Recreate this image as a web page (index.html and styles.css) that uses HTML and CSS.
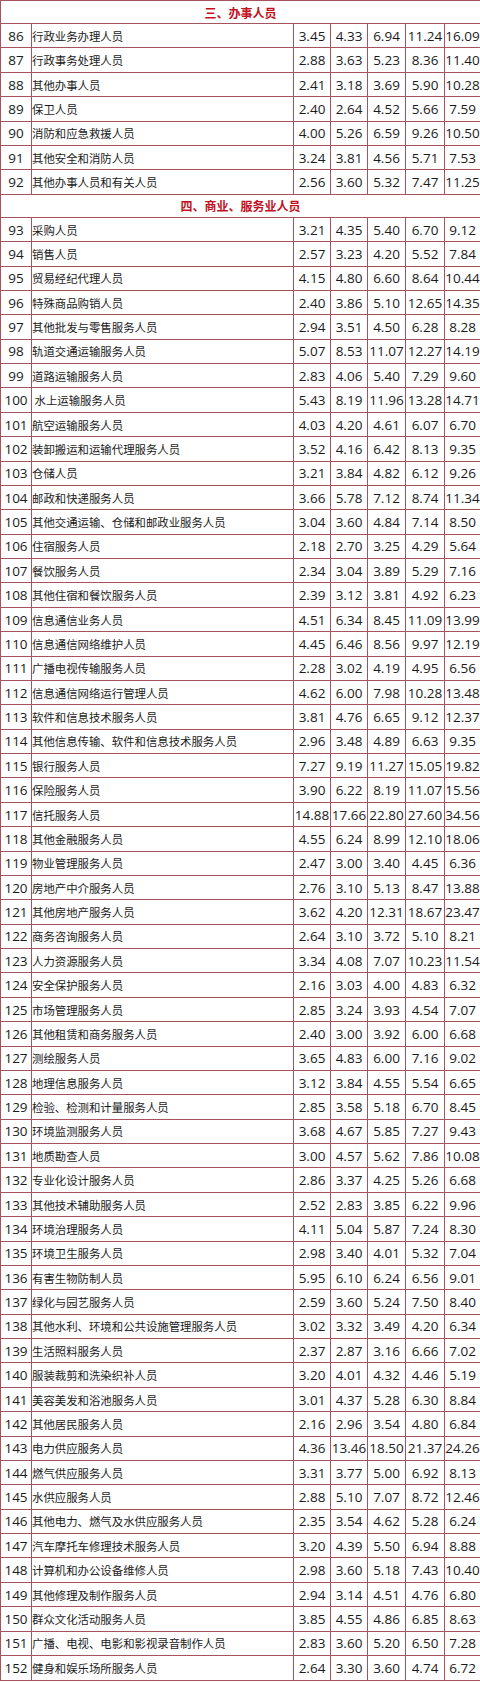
FILE: index.html
```html
<!DOCTYPE html>
<html lang="zh-CN">
<head>
<meta charset="utf-8">
<title>职业工资价位表</title>
<link rel="stylesheet" href="styles.css">
</head>
<body>
<table class="sheet">
<colgroup>
<col class="c-no"><col class="c-name"><col class="c-v1"><col class="c-v2"><col class="c-v3"><col class="c-v4"><col class="c-v5">
</colgroup>
<tbody>
<tr class="section"><td colspan="7">三、办事人员</td></tr>
<tr><td class="no">86</td><td class="name">行政业务办理人员</td><td class="v">3.45</td><td class="v">4.33</td><td class="v">6.94</td><td class="v">11.24</td><td class="v">16.09</td></tr>
<tr><td class="no">87</td><td class="name">行政事务处理人员</td><td class="v">2.88</td><td class="v">3.63</td><td class="v">5.23</td><td class="v">8.36</td><td class="v">11.40</td></tr>
<tr><td class="no">88</td><td class="name">其他办事人员</td><td class="v">2.41</td><td class="v">3.18</td><td class="v">3.69</td><td class="v">5.90</td><td class="v">10.28</td></tr>
<tr><td class="no">89</td><td class="name">保卫人员</td><td class="v">2.40</td><td class="v">2.64</td><td class="v">4.52</td><td class="v">5.66</td><td class="v">7.59</td></tr>
<tr><td class="no">90</td><td class="name">消防和应急救援人员</td><td class="v">4.00</td><td class="v">5.26</td><td class="v">6.59</td><td class="v">9.26</td><td class="v">10.50</td></tr>
<tr><td class="no">91</td><td class="name">其他安全和消防人员</td><td class="v">3.24</td><td class="v">3.81</td><td class="v">4.56</td><td class="v">5.71</td><td class="v">7.53</td></tr>
<tr><td class="no">92</td><td class="name">其他办事人员和有关人员</td><td class="v">2.56</td><td class="v">3.60</td><td class="v">5.32</td><td class="v">7.47</td><td class="v">11.25</td></tr>
<tr class="section"><td colspan="7">四、商业、服务业人员</td></tr>
<tr><td class="no">93</td><td class="name">采购人员</td><td class="v">3.21</td><td class="v">4.35</td><td class="v">5.40</td><td class="v">6.70</td><td class="v">9.12</td></tr>
<tr><td class="no">94</td><td class="name">销售人员</td><td class="v">2.57</td><td class="v">3.23</td><td class="v">4.20</td><td class="v">5.52</td><td class="v">7.84</td></tr>
<tr><td class="no">95</td><td class="name">贸易经纪代理人员</td><td class="v">4.15</td><td class="v">4.80</td><td class="v">6.60</td><td class="v">8.64</td><td class="v">10.44</td></tr>
<tr><td class="no">96</td><td class="name">特殊商品购销人员</td><td class="v">2.40</td><td class="v">3.86</td><td class="v">5.10</td><td class="v">12.65</td><td class="v">14.35</td></tr>
<tr><td class="no">97</td><td class="name">其他批发与零售服务人员</td><td class="v">2.94</td><td class="v">3.51</td><td class="v">4.50</td><td class="v">6.28</td><td class="v">8.28</td></tr>
<tr><td class="no">98</td><td class="name">轨道交通运输服务人员</td><td class="v">5.07</td><td class="v">8.53</td><td class="v">11.07</td><td class="v">12.27</td><td class="v">14.19</td></tr>
<tr><td class="no">99</td><td class="name">道路运输服务人员</td><td class="v">2.83</td><td class="v">4.06</td><td class="v">5.40</td><td class="v">7.29</td><td class="v">9.60</td></tr>
<tr><td class="no">100</td><td class="name">&nbsp;水上运输服务人员</td><td class="v">5.43</td><td class="v">8.19</td><td class="v">11.96</td><td class="v">13.28</td><td class="v">14.71</td></tr>
<tr><td class="no">101</td><td class="name">航空运输服务人员</td><td class="v">4.03</td><td class="v">4.20</td><td class="v">4.61</td><td class="v">6.07</td><td class="v">6.70</td></tr>
<tr><td class="no">102</td><td class="name">装卸搬运和运输代理服务人员</td><td class="v">3.52</td><td class="v">4.16</td><td class="v">6.42</td><td class="v">8.13</td><td class="v">9.35</td></tr>
<tr><td class="no">103</td><td class="name">仓储人员</td><td class="v">3.21</td><td class="v">3.84</td><td class="v">4.82</td><td class="v">6.12</td><td class="v">9.26</td></tr>
<tr><td class="no">104</td><td class="name">邮政和快递服务人员</td><td class="v">3.66</td><td class="v">5.78</td><td class="v">7.12</td><td class="v">8.74</td><td class="v">11.34</td></tr>
<tr><td class="no">105</td><td class="name">其他交通运输、仓储和邮政业服务人员</td><td class="v">3.04</td><td class="v">3.60</td><td class="v">4.84</td><td class="v">7.14</td><td class="v">8.50</td></tr>
<tr><td class="no">106</td><td class="name">住宿服务人员</td><td class="v">2.18</td><td class="v">2.70</td><td class="v">3.25</td><td class="v">4.29</td><td class="v">5.64</td></tr>
<tr><td class="no">107</td><td class="name">餐饮服务人员</td><td class="v">2.34</td><td class="v">3.04</td><td class="v">3.89</td><td class="v">5.29</td><td class="v">7.16</td></tr>
<tr><td class="no">108</td><td class="name">其他住宿和餐饮服务人员</td><td class="v">2.39</td><td class="v">3.12</td><td class="v">3.81</td><td class="v">4.92</td><td class="v">6.23</td></tr>
<tr><td class="no">109</td><td class="name">信息通信业务人员</td><td class="v">4.51</td><td class="v">6.34</td><td class="v">8.45</td><td class="v">11.09</td><td class="v">13.99</td></tr>
<tr><td class="no">110</td><td class="name">信息通信网络维护人员</td><td class="v">4.45</td><td class="v">6.46</td><td class="v">8.56</td><td class="v">9.97</td><td class="v">12.19</td></tr>
<tr><td class="no">111</td><td class="name">广播电视传输服务人员</td><td class="v">2.28</td><td class="v">3.02</td><td class="v">4.19</td><td class="v">4.95</td><td class="v">6.56</td></tr>
<tr><td class="no">112</td><td class="name">信息通信网络运行管理人员</td><td class="v">4.62</td><td class="v">6.00</td><td class="v">7.98</td><td class="v">10.28</td><td class="v">13.48</td></tr>
<tr><td class="no">113</td><td class="name">软件和信息技术服务人员</td><td class="v">3.81</td><td class="v">4.76</td><td class="v">6.65</td><td class="v">9.12</td><td class="v">12.37</td></tr>
<tr><td class="no">114</td><td class="name">其他信息传输、软件和信息技术服务人员</td><td class="v">2.96</td><td class="v">3.48</td><td class="v">4.89</td><td class="v">6.63</td><td class="v">9.35</td></tr>
<tr><td class="no">115</td><td class="name">银行服务人员</td><td class="v">7.27</td><td class="v">9.19</td><td class="v">11.27</td><td class="v">15.05</td><td class="v">19.82</td></tr>
<tr><td class="no">116</td><td class="name">保险服务人员</td><td class="v">3.90</td><td class="v">6.22</td><td class="v">8.19</td><td class="v">11.07</td><td class="v">15.56</td></tr>
<tr><td class="no">117</td><td class="name">信托服务人员</td><td class="v">14.88</td><td class="v">17.66</td><td class="v">22.80</td><td class="v">27.60</td><td class="v">34.56</td></tr>
<tr><td class="no">118</td><td class="name">其他金融服务人员</td><td class="v">4.55</td><td class="v">6.24</td><td class="v">8.99</td><td class="v">12.10</td><td class="v">18.06</td></tr>
<tr><td class="no">119</td><td class="name">物业管理服务人员</td><td class="v">2.47</td><td class="v">3.00</td><td class="v">3.40</td><td class="v">4.45</td><td class="v">6.36</td></tr>
<tr><td class="no">120</td><td class="name">房地产中介服务人员</td><td class="v">2.76</td><td class="v">3.10</td><td class="v">5.13</td><td class="v">8.47</td><td class="v">13.88</td></tr>
<tr><td class="no">121</td><td class="name">其他房地产服务人员</td><td class="v">3.62</td><td class="v">4.20</td><td class="v">12.31</td><td class="v">18.67</td><td class="v">23.47</td></tr>
<tr><td class="no">122</td><td class="name">商务咨询服务人员</td><td class="v">2.64</td><td class="v">3.10</td><td class="v">3.72</td><td class="v">5.10</td><td class="v">8.21</td></tr>
<tr><td class="no">123</td><td class="name">人力资源服务人员</td><td class="v">3.34</td><td class="v">4.08</td><td class="v">7.07</td><td class="v">10.23</td><td class="v">11.54</td></tr>
<tr><td class="no">124</td><td class="name">安全保护服务人员</td><td class="v">2.16</td><td class="v">3.03</td><td class="v">4.00</td><td class="v">4.83</td><td class="v">6.32</td></tr>
<tr><td class="no">125</td><td class="name">市场管理服务人员</td><td class="v">2.85</td><td class="v">3.24</td><td class="v">3.93</td><td class="v">4.54</td><td class="v">7.07</td></tr>
<tr><td class="no">126</td><td class="name">其他租赁和商务服务人员</td><td class="v">2.40</td><td class="v">3.00</td><td class="v">3.92</td><td class="v">6.00</td><td class="v">6.68</td></tr>
<tr><td class="no">127</td><td class="name">测绘服务人员</td><td class="v">3.65</td><td class="v">4.83</td><td class="v">6.00</td><td class="v">7.16</td><td class="v">9.02</td></tr>
<tr><td class="no">128</td><td class="name">地理信息服务人员</td><td class="v">3.12</td><td class="v">3.84</td><td class="v">4.55</td><td class="v">5.54</td><td class="v">6.65</td></tr>
<tr><td class="no">129</td><td class="name">检验、检测和计量服务人员</td><td class="v">2.85</td><td class="v">3.58</td><td class="v">5.18</td><td class="v">6.70</td><td class="v">8.45</td></tr>
<tr><td class="no">130</td><td class="name">环境监测服务人员</td><td class="v">3.68</td><td class="v">4.67</td><td class="v">5.85</td><td class="v">7.27</td><td class="v">9.43</td></tr>
<tr><td class="no">131</td><td class="name">地质勘查人员</td><td class="v">3.00</td><td class="v">4.57</td><td class="v">5.62</td><td class="v">7.86</td><td class="v">10.08</td></tr>
<tr><td class="no">132</td><td class="name">专业化设计服务人员</td><td class="v">2.86</td><td class="v">3.37</td><td class="v">4.25</td><td class="v">5.26</td><td class="v">6.68</td></tr>
<tr><td class="no">133</td><td class="name">其他技术辅助服务人员</td><td class="v">2.52</td><td class="v">2.83</td><td class="v">3.85</td><td class="v">6.22</td><td class="v">9.96</td></tr>
<tr><td class="no">134</td><td class="name">环境治理服务人员</td><td class="v">4.11</td><td class="v">5.04</td><td class="v">5.87</td><td class="v">7.24</td><td class="v">8.30</td></tr>
<tr><td class="no">135</td><td class="name">环境卫生服务人员</td><td class="v">2.98</td><td class="v">3.40</td><td class="v">4.01</td><td class="v">5.32</td><td class="v">7.04</td></tr>
<tr><td class="no">136</td><td class="name">有害生物防制人员</td><td class="v">5.95</td><td class="v">6.10</td><td class="v">6.24</td><td class="v">6.56</td><td class="v">9.01</td></tr>
<tr><td class="no">137</td><td class="name">绿化与园艺服务人员</td><td class="v">2.59</td><td class="v">3.60</td><td class="v">5.24</td><td class="v">7.50</td><td class="v">8.40</td></tr>
<tr><td class="no">138</td><td class="name">其他水利、环境和公共设施管理服务人员</td><td class="v">3.02</td><td class="v">3.32</td><td class="v">3.49</td><td class="v">4.20</td><td class="v">6.34</td></tr>
<tr><td class="no">139</td><td class="name">生活照料服务人员</td><td class="v">2.37</td><td class="v">2.87</td><td class="v">3.16</td><td class="v">6.66</td><td class="v">7.02</td></tr>
<tr><td class="no">140</td><td class="name">服装裁剪和洗染织补人员</td><td class="v">3.20</td><td class="v">4.01</td><td class="v">4.32</td><td class="v">4.46</td><td class="v">5.19</td></tr>
<tr><td class="no">141</td><td class="name">美容美发和浴池服务人员</td><td class="v">3.01</td><td class="v">4.37</td><td class="v">5.28</td><td class="v">6.30</td><td class="v">8.84</td></tr>
<tr><td class="no">142</td><td class="name">其他居民服务人员</td><td class="v">2.16</td><td class="v">2.96</td><td class="v">3.54</td><td class="v">4.80</td><td class="v">6.84</td></tr>
<tr><td class="no">143</td><td class="name">电力供应服务人员</td><td class="v">4.36</td><td class="v">13.46</td><td class="v">18.50</td><td class="v">21.37</td><td class="v">24.26</td></tr>
<tr><td class="no">144</td><td class="name">燃气供应服务人员</td><td class="v">3.31</td><td class="v">3.77</td><td class="v">5.00</td><td class="v">6.92</td><td class="v">8.13</td></tr>
<tr><td class="no">145</td><td class="name">水供应服务人员</td><td class="v">2.88</td><td class="v">5.10</td><td class="v">7.07</td><td class="v">8.72</td><td class="v">12.46</td></tr>
<tr><td class="no">146</td><td class="name">其他电力、燃气及水供应服务人员</td><td class="v">2.35</td><td class="v">3.54</td><td class="v">4.62</td><td class="v">5.28</td><td class="v">6.24</td></tr>
<tr><td class="no">147</td><td class="name">汽车摩托车修理技术服务人员</td><td class="v">3.20</td><td class="v">4.39</td><td class="v">5.50</td><td class="v">6.94</td><td class="v">8.88</td></tr>
<tr><td class="no">148</td><td class="name">计算机和办公设备维修人员</td><td class="v">2.98</td><td class="v">3.60</td><td class="v">5.18</td><td class="v">7.43</td><td class="v">10.40</td></tr>
<tr><td class="no">149</td><td class="name">其他修理及制作服务人员</td><td class="v">2.94</td><td class="v">3.14</td><td class="v">4.51</td><td class="v">4.76</td><td class="v">6.80</td></tr>
<tr><td class="no">150</td><td class="name">群众文化活动服务人员</td><td class="v">3.85</td><td class="v">4.55</td><td class="v">4.86</td><td class="v">6.85</td><td class="v">8.63</td></tr>
<tr><td class="no">151</td><td class="name">广播、电视、电影和影视录音制作人员</td><td class="v">2.83</td><td class="v">3.60</td><td class="v">5.20</td><td class="v">6.50</td><td class="v">7.28</td></tr>
<tr><td class="no">152</td><td class="name">健身和娱乐场所服务人员</td><td class="v">2.64</td><td class="v">3.30</td><td class="v">3.60</td><td class="v">4.74</td><td class="v">6.72</td></tr>
</tbody>
</table>
</body>
</html>
```
FILE: styles.css
```css
html, body {
  margin: 0;
  padding: 0;
  background: #ffffff;
}

body {
  width: 480px;
  color: #1a1a1a;
  font-family: "Open Sans", "Noto Sans CJK SC", sans-serif;
}

.sheet {
  width: 480px;
  height: 1681px;
  border-collapse: collapse;
  table-layout: fixed;
}

.c-no { width: 31px; }
.c-name { width: 262px; }
.c-v1 { width: 37px; }
.c-v2 { width: 37px; }
.c-v3 { width: 38px; }
.c-v4 { width: 39px; }
.c-v5 { width: 36px; }

.sheet td {
  border: 1px solid #a5545e;
  padding: 0;
  vertical-align: middle;
  white-space: nowrap;
  overflow: hidden;
}

.section td {
  text-align: center;
  color: #c2101e;
  font-family: "Noto Sans CJK SC", sans-serif;
  font-size: 12px;
  font-weight: 700;
}

.no {
  text-align: center;
  font-size: 13.5px;
  padding-top: 1px;
}

.name {
  text-align: left;
  padding-left: 2px;
  font-family: "Noto Sans CJK SC", sans-serif;
  font-size: 11.4px;
}

.v {
  text-align: center;
  font-size: 13.5px;
  padding-top: 1px;
}
```
